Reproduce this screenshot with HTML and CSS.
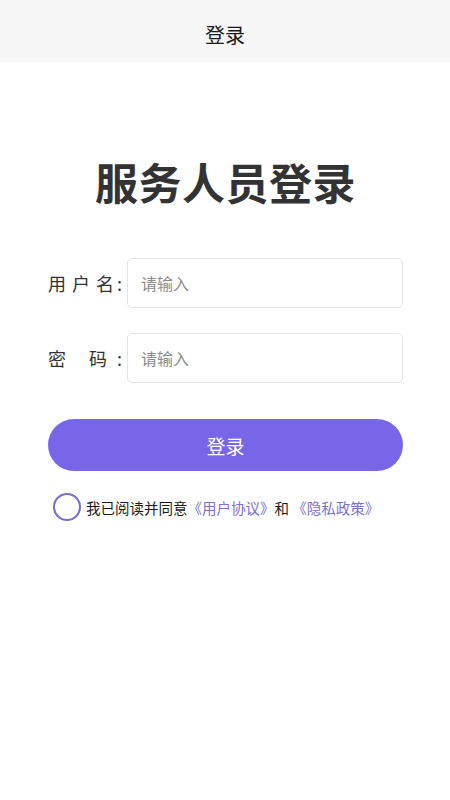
FILE: index.html
```html
<!DOCTYPE html>
<html lang="zh">
<head>
<meta charset="utf-8">
<title>登录</title>
<link rel="stylesheet" href="styles.css">
</head>
<body>
<header class="nav"><span class="nav-title">登录</span></header>
<main class="page">
  <h1 class="title">服务人员登录</h1>
  <div class="form">
    <div class="row">
      <label class="label"><span class="label-text">用户名</span><span class="colon">:</span></label>
      <div class="input"><span class="placeholder">请输入</span></div>
    </div>
    <div class="row">
      <label class="label"><span class="label-text label-text-short">密码</span><span class="colon colon-wide">:</span></label>
      <div class="input"><span class="placeholder">请输入</span></div>
    </div>
  </div>
  <button class="btn">登录</button>
  <div class="agree">
    <span class="radio"></span>
    <span class="agree-text">我已阅读并同意<span class="link">《用户协议》</span>和 <span class="link">《隐私政策》</span></span>
  </div>
</main>
</body>
</html>
```
FILE: styles.css
```css
* { box-sizing: border-box; }
html, body { margin: 0; padding: 0; background: #fff; }
body {
  font-family: "Noto Sans CJK SC", "Noto Sans", sans-serif;
  color: #222;
  width: 450px;
}
.nav {
  height: 62px;
  background: #f7f7f7;
  display: flex;
  align-items: center;
  justify-content: center;
  padding-top: 8px;
}
.nav-title { font-size: 20px; color: #1a1a1a; line-height: 1; }
.page { padding: 0 47px 0 48px; }
.title {
  margin: 89px 0 0;
  text-align: center;
  font-size: 43px;
  line-height: 60px;
  font-weight: 700;
  color: #333;
  letter-spacing: 0.5px;
}
.form {
  margin-top: 47px;
  display: flex;
  flex-direction: column;
  gap: 25px;
}
.row { display: flex; align-items: center; }
.label {
  width: 79px;
  display: flex;
  align-items: center;
  font-size: 18px;
  color: #333;
  line-height: 1;
}
.label-text {
  width: 66px;
  text-align: justify;
  text-align-last: justify;
}
.label-text-short { width: 59px; }
.colon { margin-left: 3px; }
.colon-wide { margin-left: 10px; }
.input {
  flex: 1;
  height: 50px;
  border: 1px solid #e4e4e4;
  border-radius: 5px;
  display: flex;
  align-items: center;
  padding-left: 13px;
}
.placeholder { font-size: 16px; color: #8c8c8c; }
.btn {
  display: block;
  width: 100%;
  height: 52px;
  margin-top: 36px;
  border: none;
  border-radius: 26px;
  background: #7866e8;
  color: #fff;
  font-family: inherit;
  font-size: 19px;
  padding: 0;
}
.agree {
  margin-top: 22px;
  display: flex;
  align-items: center;
  padding-left: 5px;
}
.radio {
  width: 28px;
  height: 28px;
  border: 2.5px solid #7a6cd3;
  border-radius: 50%;
  flex-shrink: 0;
}
.agree-text { margin-left: 5px; font-size: 14.5px; color: #1a1a1a; }
.link { color: #7a6fcf; }
```
